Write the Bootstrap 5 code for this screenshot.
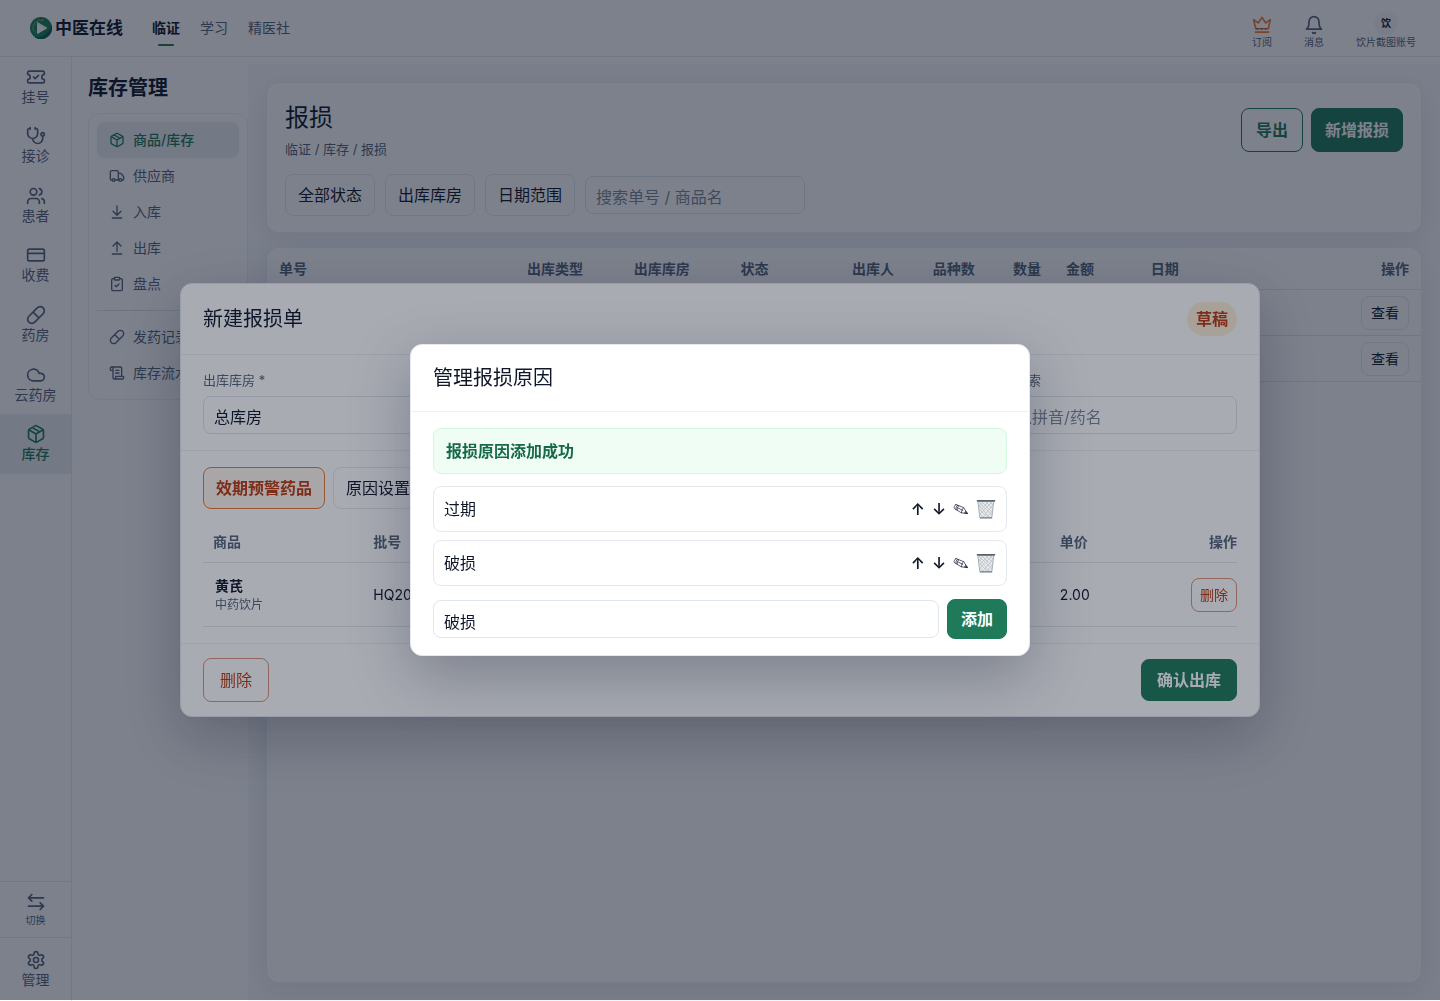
<!DOCTYPE html>
<html lang="zh-CN">
<head>
<meta charset="utf-8">
<meta name="viewport" content="width=device-width, initial-scale=1">
<title>报损 - 库存管理</title>
<link href="https://cdn.jsdelivr.net/npm/bootstrap@5.3.0/dist/css/bootstrap.min.css" rel="stylesheet">
<style>
:root{--ink:#0f172a;--muted:#55647a;--line:#e5e9ef;--soft:#edf0f4;--green:#1f7a5a;--rust:#bd3a10}
body{font-family:Inter,"Noto Sans CJK SC",sans-serif;font-size:14px;line-height:20px;color:var(--ink);height:100vh;overflow:hidden;background:#fff}
a{color:inherit;text-decoration:none}
svg{fill:none;stroke:currentColor;stroke-width:2;stroke-linecap:round;stroke-linejoin:round;flex:none}
.i20{width:20px;height:20px}
.i16{width:16px;height:16px}
.topbar{height:57px;border-bottom:1px solid var(--line);padding:0 24px 0 30px}
.brand-link{gap:3px}
.brand-name{font-size:17px;font-weight:700}
.tabs-top{gap:20px;margin-left:29px}
.tabs-top a{color:var(--muted);padding:18px 0;position:relative}
.tabs-top a.on{color:var(--ink);font-weight:700}
.tabs-top a.on::after{content:"";position:absolute;left:6px;right:6px;bottom:10px;height:2px;border-radius:1px;background:var(--green)}
.tools{padding-top:3px}
.tool{font-size:10px;line-height:14px;color:var(--muted)}
.tool svg{width:20px;height:20px}
.avatar{width:24px;height:24px;border-radius:50%;background:#f5f7f9;color:var(--ink);font-weight:600;line-height:24px;text-align:center}
.rail{width:72px;border-right:1px solid var(--line);color:var(--muted)}
.rail a{display:flex;flex-direction:column;align-items:center;justify-content:center}
.rail-list{display:grid;grid-template-rows:repeat(7,1fr);height:417px}
.rail a.on{background:#eaeff0;color:var(--green);font-weight:500}
.rail-foot a{border-top:1px solid var(--line)}
.rail-foot .swap{height:56px;font-size:10px;line-height:16px}
.rail-foot .manage{height:64px}
.subnav{width:176px;padding:17px 0 0 16px}
.subnav h1{font-size:20px;line-height:28px;font-weight:700;margin:0 0 11px}
.subnav-box{border:1px solid var(--soft);border-radius:12px;padding:8px;color:var(--muted)}
.subnav-box a{display:flex;align-items:center;gap:8px;height:36px;padding:0 12px;border-radius:8px}
.subnav-box a.on{background:#eaeff0;color:var(--green);font-weight:500}
.subnav-box hr{margin:8px 0;border-color:#dde3ea;opacity:1}
.stage{margin-top:7px;padding:18px;background:#f7f9fb;overflow:hidden;gap:14px}
.panel{background:#fff;border:1px solid var(--soft);border-radius:12px;box-shadow:0 8px 24px rgba(15,23,42,.08)}
.panel-head{padding:18px 18px 16px}
.panel h2{font-size:24px;line-height:34px;font-weight:400;margin:0 0 5px}
.crumbs{font-size:13px;line-height:18px;color:var(--muted)}
.filters{gap:10px}
.btn-plain,.btn-go,.btn-line,.btn-danger-line,.btn-warn{border-radius:8px;border:1px solid var(--line);background:#fff;color:var(--ink);font-size:16px;line-height:24px;padding:8px 12px;white-space:nowrap}
.btn-go{background:var(--green);border-color:var(--green);color:#fff;font-weight:700}
.btn-line{border-color:var(--green);color:var(--green);font-weight:700;padding:9px 14px}
.btn-danger-line{border-color:#e0917c;color:var(--rust)}
.btn-warn{background:#fff7ed;border-color:#ea7a3c;color:var(--rust);font-weight:700}
.tall{padding:9px 13px}
.confirm{padding:8px 15px}
.small-btn{font-size:14px;line-height:20px;padding:6px 9px}
.field{height:38px;border:1px solid #dfe5ec;border-radius:8px;padding:7px 10px 3px;font-size:16px;line-height:24px;color:var(--ink);background:#fff;width:100%}
.field::placeholder{color:#7c899b;opacity:1}
.stage .field{width:220px}
.grid-tb{width:100%;table-layout:fixed;border-collapse:separate;border-spacing:0}
.grid-tb th{color:var(--muted);font-weight:600}
.grid-tb th,.grid-tb td{border-bottom:1px solid #e2e7ed}
.list-tb th{height:42px;padding:0 12px}
.list-tb td{height:46px;padding:0 12px}
.scrim{position:fixed;top:0;left:0;right:0;bottom:1px;display:flex;align-items:center;justify-content:center;padding:16px}
.scrim-a{background:rgba(15,23,42,.28)}
.scrim-b{background:rgba(15,23,42,.36)}
.dialog{background:#fff;border:1px solid var(--line);border-radius:12px;box-shadow:0 20px 60px rgba(15,23,42,.28);width:100%}
.dialog-a{max-width:1080px}
.dialog-b{max-width:620px}
.dialog h3{font-size:20px;line-height:30px;font-weight:400;margin:0}
.bar{padding:18px 22px;border-bottom:1px solid var(--soft)}
.pill{background:#fdf0d8;color:var(--rust);font-weight:700;font-size:16px;line-height:34px;padding:0 9px;border-radius:17px}
.block-a{padding:16px 22px;border-bottom:1px solid var(--soft)}
.form-grid{display:grid;grid-template-columns:repeat(4,1fr);gap:14px}
.form-grid label{display:block;font-size:13px;line-height:18px;color:var(--muted);margin-bottom:7px}
.form-grid .last{grid-column:4}
.form-grid select{appearance:none}
.items-tb{margin-top:13px}
.items-tb th{height:41px;padding:0 10px}
.items-tb td{height:64px;padding:0 10px}
.items-tb th:last-child,.items-tb td:last-child{padding-right:0}
.herb{padding-left:2px;line-height:19px}
.herb span{display:block;font-size:12px;color:var(--muted)}
.foot-a{padding:14px 22px}
.body-b{padding:16px 22px}
.notice{background:#f0fdf4;border:1px solid #d3f8df;border-radius:8px;color:#17694a;font-size:16px;font-weight:700;line-height:24px;padding:10px 12px;margin-bottom:12px}
.reason{height:46px;border:1px solid var(--line);border-radius:8px;padding:0 10px;font-size:16px;line-height:24px}
.reason button{border:0;background:none;padding:0;color:var(--ink);line-height:20px;display:flex;font-weight:600}
.acts{gap:7px}
.add-row{margin-top:13px;gap:8px}
.add-row .btn-go{padding:7px 13px}
</style>
<script src="https://cdn.jsdelivr.net/npm/bootstrap@5.3.0/dist/js/bootstrap.bundle.min.js"></script>
</head>
<body class="d-flex flex-column">
<svg width="0" height="0" class="position-absolute" aria-hidden="true">
  <symbol id="pkg" viewBox="0 0 24 24"><path d="m7.5 4.27 9 5.15M21 8a2 2 0 0 0-1-1.73l-7-4a2 2 0 0 0-2 0l-7 4A2 2 0 0 0 3 8v8a2 2 0 0 0 1 1.73l7 4a2 2 0 0 0 2 0l7-4A2 2 0 0 0 21 16ZM3.3 7l8.7 5 8.7-5M12 22V12"/></symbol>
  <symbol id="pill" viewBox="0 0 24 24"><path d="m10.5 20.5 10-10a4.95 4.95 0 1 0-7-7l-10 10a4.95 4.95 0 1 0 7 7ZM8.5 8.5l7 7"/></symbol>
  <symbol id="pencil" viewBox="0 0 16 14"><g stroke="#2b3446" stroke-width=".8"><path d="M3 2.600 10.600 5.600 14.600 11.600 8.400 10.800 1.400 6.600C.6 5.400 1.600 2.800 3 2.600ZM4.600 3.300C3.400 4 2.600 6 3 7.500M5.800 3.800C4.600 4.500 3.900 6.400 4.200 8.200M4.800 5.800l5 2.600M10.600 5.600C9.400 6.600 8.400 9 8.400 10.800"/><path d="m12.800 9.600 1.800 2-2.600-.3Z" fill="#2b3446"/></g></symbol>
  <symbol id="bin" viewBox="0 0 20 20"><path d="M2.300 2.500h15.400L15.800 18.500H4.200Z" fill="#e6e9ec" stroke="#a3abb2" stroke-width="1"/><path d="m3 6 10 12M3 3l13 13M6 3l10 10M10 3l7 7M14 3l3 3M4 11l7 7M4 15l3 3M17 6 7 18M16 3 4 15M12 3 3.500 12M7 3 3 8M16.400 12l-5 6" stroke="#bcc3c9" stroke-width=".8"/><path d="M.8 1.800h18.400" stroke="#59636e" stroke-width="1.600" stroke-linecap="butt"/><path d="M4.200 19h11.600" stroke="#6b747e" stroke-width="1"/></symbol>
</svg>

<header class="topbar d-flex align-items-center flex-shrink-0">
  <a href="#" class="brand-link d-flex align-items-center">
    <svg width="22" height="22" viewBox="0 0 22 22"><circle cx="11" cy="11" r="11" fill="#16805a" stroke="none"/><path d="M21.500 8a11 11 0 0 1-17 12c8 1 14-3 17-12Z" fill="#0e5f45" stroke="none"/><path d="M3 13A8.500 8.500 0 0 1 15 3.500M5 15A7 7 0 0 1 13 4" stroke="#c9a54e" stroke-width="1" stroke-dasharray="1 3"/><path d="M7.500 6v10.500L16.500 11.200Z" fill="#fff" stroke="#fff" stroke-width="1"/></svg>
    <span class="brand-name">中医在线</span>
  </a>
  <nav class="tabs-top d-flex">
    <a href="#" class="on">临证</a><a href="#">学习</a><a href="#">精医社</a>
  </nav>
  <div class="tools d-flex ms-auto align-items-end">
    <a href="#" class="tool d-flex flex-column align-items-center me-4"><svg viewBox="0 0 24 24" style="color:#f08030"><path d="M4.500 16.500 2 5.500l5.500 4L12 3l4.500 6.500 5.500-4L19.500 16.500ZM4 20.500h16"/><path d="M6 16.500h12" stroke="#b84a10" stroke-dasharray="1 4"/></svg>订阅</a>
    <a href="#" class="tool d-flex flex-column align-items-center ms-2 me-4"><svg viewBox="0 0 24 24"><path d="M6 8a6 6 0 0 1 12 0c0 7 3 9 3 9H3s3-2 3-9M10.300 21a1.940 1.940 0 0 0 3.400 0"/></svg>消息</a>
    <a href="#" class="tool d-flex flex-column align-items-center ms-2"><span class="avatar">饮</span>饮片截图账号</a>
  </div>
</header>

<div class="d-flex flex-grow-1" style="min-height:0">
  <aside class="rail d-flex flex-column flex-shrink-0">
    <nav class="rail-list">
      <a href="#"><svg class="i20" viewBox="0 0 24 24"><path d="M2 9a3 3 0 0 1 0 6v2a2 2 0 0 0 2 2h16a2 2 0 0 0 2-2v-2a3 3 0 0 1 0-6V7a2 2 0 0 0-2-2H4a2 2 0 0 0-2 2ZM9 12l2 2 4-4"/></svg>挂号</a>
      <a href="#"><svg class="i20" viewBox="0 0 24 24"><path d="M11 2v2M5 2v2M5 3H4a2 2 0 0 0-2 2v4a6 6 0 0 0 12 0V5a2 2 0 0 0-2-2h-1M8 15a6 6 0 0 0 12 0v-3"/><circle cx="20" cy="10" r="2"/></svg>接诊</a>
      <a href="#"><svg class="i20" viewBox="0 0 24 24"><path d="M16 21v-2a4 4 0 0 0-4-4H6a4 4 0 0 0-4 4v2M22 21v-2a4 4 0 0 0-3-3.870M16 3.130a4 4 0 0 1 0 7.750"/><circle cx="9" cy="7" r="4"/></svg>患者</a>
      <a href="#"><svg class="i20" viewBox="0 0 24 24"><rect x="2" y="5" width="20" height="14" rx="2"/><path d="M2 10h20"/></svg>收费</a>
      <a href="#"><svg class="i20"><use href="#pill"/></svg>药房</a>
      <a href="#"><svg class="i20" viewBox="0 0 24 24"><path d="M17.500 19H9a7 7 0 1 1 6.710-9h1.790a4.500 4.500 0 1 1 0 9Z"/></svg>云药房</a>
      <a href="#" class="on"><svg class="i20"><use href="#pkg"/></svg>库存</a>
    </nav>
    <div class="rail-foot mt-auto">
      <a href="#" class="swap"><svg class="i20" viewBox="0 0 24 24"><path d="M7 3 3 7l4 4M3 7h18M17 13l4 4-4 4M21 17H3"/></svg>切换</a>
      <a href="#" class="manage"><svg class="i20" viewBox="0 0 24 24"><path d="M12.220 2h-.44a2 2 0 0 0-2 2v.18a2 2 0 0 1-1 1.730l-.43.25a2 2 0 0 1-2 0l-.15-.08a2 2 0 0 0-2.730.73l-.22.38a2 2 0 0 0 .73 2.730l.15.1a2 2 0 0 1 1 1.720v.51a2 2 0 0 1-1 1.740l-.15.09a2 2 0 0 0-.73 2.730l.22.38a2 2 0 0 0 2.730.73l.15-.08a2 2 0 0 1 2 0l.43.25a2 2 0 0 1 1 1.730V20a2 2 0 0 0 2 2h.44a2 2 0 0 0 2-2v-.18a2 2 0 0 1 1-1.730l.43-.25a2 2 0 0 1 2 0l.15.08a2 2 0 0 0 2.730-.73l.22-.39a2 2 0 0 0-.73-2.730l-.15-.08a2 2 0 0 1-1-1.740v-.5a2 2 0 0 1 1-1.740l.15-.09a2 2 0 0 0 .73-2.730l-.22-.38a2 2 0 0 0-2.730-.73l-.15.08a2 2 0 0 1-2 0l-.43-.25a2 2 0 0 1-1-1.730V4a2 2 0 0 0-2-2z"/><circle cx="12" cy="12" r="3"/></svg>管理</a>
    </div>
  </aside>

  <aside class="subnav flex-shrink-0">
    <h1>库存管理</h1>
    <nav class="subnav-box">
      <a href="#" class="on"><svg class="i16"><use href="#pkg"/></svg>商品/库存</a>
      <a href="#"><svg class="i16" viewBox="0 0 24 24"><path d="M14 18V6a2 2 0 0 0-2-2H4a2 2 0 0 0-2 2v11a1 1 0 0 0 1 1h2M15 18H9M19 18h2a1 1 0 0 0 1-1v-3.650a1 1 0 0 0-.22-.62l-3.480-4.350A1 1 0 0 0 17.520 8H14"/><circle cx="17" cy="18" r="2"/><circle cx="7" cy="18" r="2"/></svg>供应商</a>
      <a href="#"><svg class="i16" viewBox="0 0 24 24"><path d="M12 17V3M6 11l6 6 6-6M19 21H5"/></svg>入库</a>
      <a href="#"><svg class="i16" viewBox="0 0 24 24"><path d="m18 9-6-6-6 6M12 3v14M5 21h14"/></svg>出库</a>
      <a href="#"><svg class="i16" viewBox="0 0 24 24"><rect x="8" y="2" width="8" height="4" rx="1"/><path d="M16 4h2a2 2 0 0 1 2 2v14a2 2 0 0 1-2 2H6a2 2 0 0 1-2-2V6a2 2 0 0 1 2-2h2M9 14l2 2 4-4"/></svg>盘点</a>
      <hr>
      <a href="#"><svg class="i16"><use href="#pill"/></svg>发药记录</a>
      <a href="#"><svg class="i16" viewBox="0 0 24 24"><path d="M15 12h-5M15 8h-5M19 17V5a2 2 0 0 0-2-2H4M8 21h12a2 2 0 0 0 2-2v-1a1 1 0 0 0-1-1H11a1 1 0 0 0-1 1v1a2 2 0 1 1-4 0V5a2 2 0 1 0-4 0v2a1 1 0 0 0 1 1h3"/></svg>库存流水</a>
    </nav>
  </aside>

  <main class="stage flex-grow-1 d-flex flex-column">
    <section class="panel panel-head">
      <div class="d-flex justify-content-between">
        <div>
          <h2>报损</h2>
          <div class="crumbs">临证 / 库存 / 报损</div>
        </div>
        <div class="d-flex align-items-center gap-2">
          <button type="button" class="btn-line">导出</button>
          <button type="button" class="btn-go tall">新增报损</button>
        </div>
      </div>
      <div class="filters d-flex align-items-center mt-3">
        <button type="button" class="btn-plain">全部状态</button>
        <button type="button" class="btn-plain">出库库房</button>
        <button type="button" class="btn-plain">日期范围</button>
        <input type="text" class="field" placeholder="搜索单号 / 商品名" aria-label="搜索单号 / 商品名">
      </div>
    </section>
    <section class="panel flex-grow-1 overflow-hidden">
      <table class="grid-tb list-tb">
        <colgroup><col style="width:21.500%"><col style="width:9.250%"><col style="width:9.250%"><col style="width:9.650%"><col style="width:7%"><col style="width:6.950%"><col style="width:4.600%"><col style="width:7.350%"><col></colgroup>
        <thead><tr><th class="text-nowrap">单号</th><th>出库类型</th><th>出库库房</th><th>状态</th><th>出库人</th><th>品种数</th><th class="text-nowrap">数量</th><th>金额</th><th><div class="d-flex justify-content-between"><span>日期</span><span>操作</span></div></th></tr></thead>
        <tbody>
          <tr><td colspan="9" class="text-end"><button type="button" class="btn-plain small-btn">查看</button></td></tr>
          <tr><td colspan="9" class="text-end"><button type="button" class="btn-plain small-btn">查看</button></td></tr>
        </tbody>
      </table>
    </section>
  </main>
</div>

<div class="scrim scrim-a">
  <div class="dialog dialog-a" role="dialog" aria-labelledby="t1">
    <div class="bar d-flex justify-content-between align-items-center"><h3 id="t1">新建报损单</h3><span class="pill">草稿</span></div>
    <div class="block-a form-grid">
      <div><label for="store">出库库房 *</label><select id="store" class="field"><option>总库房</option></select></div>
      <div class="last"><label for="find">药品搜索</label><input id="find" type="text" class="field" placeholder="输入拼音/药名"></div>
    </div>
    <div class="block-a">
      <div class="d-flex gap-2"><button type="button" class="btn-warn">效期预警药品</button><button type="button" class="btn-plain">原因设置</button></div>
      <table class="grid-tb items-tb">
        <colgroup><col style="width:15.500%"><col><col style="width:10%"><col style="width:8.100%"></colgroup>
        <thead><tr><th>商品</th><th>批号</th><th>单价</th><th class="text-end">操作</th></tr></thead>
        <tbody><tr><td><div class="herb"><b>黄芪</b><span>中药饮片</span></div></td><td>HQ20</td><td>2.00</td><td class="text-end"><button type="button" class="btn-danger-line small-btn px-2">删除</button></td></tr></tbody>
      </table>
    </div>
    <div class="foot-a d-flex justify-content-between align-items-center"><button type="button" class="btn-danger-line tall px-3">删除</button><button type="button" class="btn-go confirm">确认出库</button></div>
  </div>
</div>

<div class="scrim scrim-b">
  <div class="dialog dialog-b" role="dialog" aria-labelledby="t2">
    <div class="bar"><h3 id="t2">管理报损原因</h3></div>
    <div class="body-b">
      <div class="notice" role="status">报损原因添加成功</div>
      <div class="d-flex flex-column gap-2">
        <div class="reason d-flex align-items-center justify-content-between"><span>过期</span>
          <span class="acts d-flex align-items-center"><button type="button">↑</button><button type="button">↓</button><button type="button" aria-label="编辑"><svg width="16" height="14"><use href="#pencil"/></svg></button><button type="button" aria-label="删除"><svg width="20" height="20"><use href="#bin"/></svg></button></span></div>
        <div class="reason d-flex align-items-center justify-content-between"><span>破损</span>
          <span class="acts d-flex align-items-center"><button type="button">↑</button><button type="button">↓</button><button type="button" aria-label="编辑"><svg width="16" height="14"><use href="#pencil"/></svg></button><button type="button" aria-label="删除"><svg width="20" height="20"><use href="#bin"/></svg></button></span></div>
      </div>
      <div class="add-row d-flex align-items-center"><input type="text" class="field" value="破损" aria-label="报损原因"><button type="button" class="btn-go">添加</button></div>
    </div>
  </div>
</div>
</body>
</html>
